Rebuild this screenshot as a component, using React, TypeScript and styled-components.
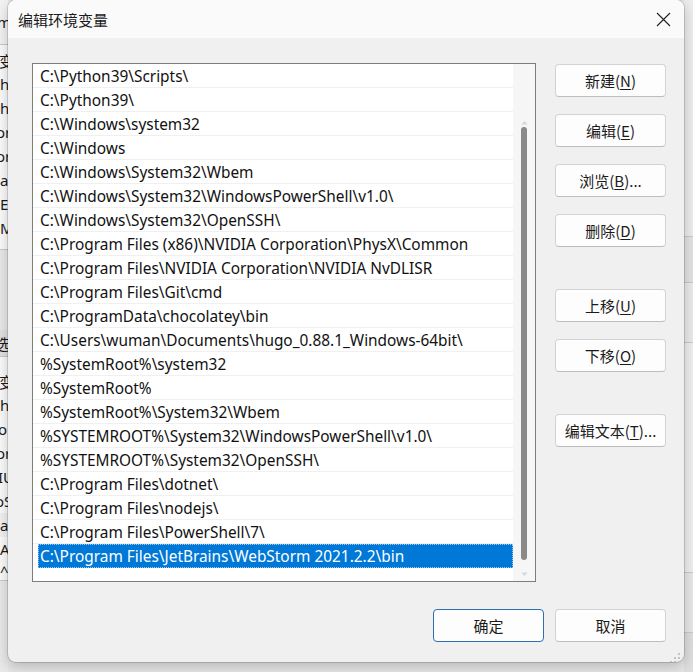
import React from 'react';
import styled, { createGlobalStyle } from 'styled-components';

const GlobalStyle = createGlobalStyle`
  html, body { margin: 0; padding: 0; }
  body {
    width: 693px; height: 672px; overflow: hidden; background: #e9e9e9;
    font-family: "Noto Sans", "Noto Sans CJK SC", sans-serif;
  }
`;

const Desktop = styled.div`
  position: relative; width: 693px; height: 672px; overflow: hidden; background: #e6e6e6;
`;

const BackWindow = styled.div`
  position: absolute; inset: 0; display: flex; justify-content: space-between;
`;

const Strip = styled.div<{ w: number }>`
  width: ${p => p.w}px; display: flex; flex-direction: column; overflow: hidden;
`;

const Band = styled.div<{ h: number; bg: string; line?: boolean }>`
  height: ${p => p.h}px; flex: none; background: ${p => p.bg};
  border-bottom: ${p => (p.line ? '1px solid #c9c9c9' : 'none')};
  display: flex; align-items: center; white-space: nowrap; overflow: hidden;
  font-size: 15px; color: #1a1a1a; box-sizing: border-box;
`;

const BackLabel = styled.span<{ shift: number }>`
  margin-left: ${p => p.shift}px;
`;

const Dialog = styled.div`
  position: absolute; left: 8px; top: 0; width: 676px; height: 662px;
  background: #f0f0f0; border-radius: 8px; overflow: hidden;
  box-shadow: 0 0 0 1px rgba(0,0,0,0.14), 0 4px 14px rgba(0,0,0,0.22);
  display: flex; flex-direction: column;
`;

const TitleBar = styled.div`
  height: 38px; flex: none; background: #fafafa; display: flex; align-items: center;
  justify-content: space-between; padding-left: 10px;
`;

const Title = styled.span`
  font-size: 15px; color: #1b1b1b;
  font-family: "Noto Sans CJK SC", sans-serif;
`;

const CloseButton = styled.div`
  width: 42px; height: 38px; display: flex; align-items: center; justify-content: center;
`;

const Body = styled.div`
  flex: 1; display: flex; flex-direction: column; padding: 25px 18px 20px 24px;
  position: relative;
`;

const MainRow = styled.div`
  display: flex; gap: 19px; align-items: flex-start;
`;

const ListBox = styled.div`
  width: 504px; height: 519px; box-sizing: border-box; border: 1px solid #7d7d7d;
  background: #fff; display: flex;
`;

const Items = styled.div`
  width: 480px; display: flex; flex-direction: column;
`;

const Row = styled.div<{ selected?: boolean }>`
  height: 24px; box-sizing: border-box; flex: none;
  border-bottom: 1px solid ${p => (p.selected ? '#0078d7' : '#f0f0f0')};
  display: flex; align-items: center; white-space: nowrap; overflow: hidden;
  font-size: 15.4px; padding-top: 2px;
  margin-left: ${p => (p.selected ? 5 : 0)}px;
  padding-left: ${p => (p.selected ? 2 : 7)}px;
  background: ${p => (p.selected ? '#0078d7' : 'transparent')};
  color: ${p => (p.selected ? '#ffffff' : '#111111')};
  outline: ${p => (p.selected ? '1px dotted #9ec8ee' : 'none')};
  outline-offset: -1px;
`;

const ScrollTrack = styled.div`
  width: 22px; background: #f6f6f6; display: flex; flex-direction: column; align-items: center;
`;

const Arrow = styled.div<{ mt: number }>`
  margin-top: ${p => p.mt}px; height: 6px; display: flex; align-items: center; justify-content: center;
`;

const Thumb = styled.div`
  margin-top: 2px; width: 6px; height: 433px; border-radius: 3px; background: #8a8a8a;
`;

const Spacer = styled.div<{ h?: number }>`
  flex: ${p => (p.h ? 'none' : '1')}; height: ${p => (p.h ? `${p.h}px` : 'auto')};
`;

const ButtonColumn = styled.div`
  width: 111px; display: flex; flex-direction: column; padding-top: 1px;
`;

const Button = styled.div<{ mt?: number; primary?: boolean }>`
  margin-top: ${p => p.mt ?? 0}px; width: 111px; height: 33px; box-sizing: border-box;
  background: #fdfdfd; border: 1px solid ${p => (p.primary ? '#2d6fb5' : '#d3d3d3')};
  border-bottom-color: ${p => (p.primary ? '#2d6fb5' : '#bdbdbd')};
  border-radius: 4px; display: flex; align-items: center; justify-content: center;
  font-size: 15px; color: #1b1b1b; font-family: "Noto Sans CJK SC", sans-serif;
  u { text-underline-offset: 2px; }
`;

const Footer = styled.div`
  margin-top: 27px; display: flex; justify-content: flex-end; gap: 11px;
`;

const Grip = styled.div`
  position: absolute; right: 3px; bottom: 3px; width: 12px; height: 12px;
`;

const paths = [
  'C:\\Python39\\Scripts\\',
  'C:\\Python39\\',
  'C:\\Windows\\system32',
  'C:\\Windows',
  'C:\\Windows\\System32\\Wbem',
  'C:\\Windows\\System32\\WindowsPowerShell\\v1.0\\',
  'C:\\Windows\\System32\\OpenSSH\\',
  'C:\\Program Files (x86)\\NVIDIA Corporation\\PhysX\\Common',
  'C:\\Program Files\\NVIDIA Corporation\\NVIDIA NvDLISR',
  'C:\\Program Files\\Git\\cmd',
  'C:\\ProgramData\\chocolatey\\bin',
  'C:\\Users\\wuman\\Documents\\hugo_0.88.1_Windows-64bit\\',
  '%SystemRoot%\\system32',
  '%SystemRoot%',
  '%SystemRoot%\\System32\\Wbem',
  '%SYSTEMROOT%\\System32\\WindowsPowerShell\\v1.0\\',
  '%SYSTEMROOT%\\System32\\OpenSSH\\',
  'C:\\Program Files\\dotnet\\',
  'C:\\Program Files\\nodejs\\',
  'C:\\Program Files\\PowerShell\\7\\',
  'C:\\Program Files\\JetBrains\\WebStorm 2021.2.2\\bin',
];

type BandDef = { h: number; bg: string; line?: boolean; text?: string; shift?: number };

const leftBands: BandDef[] = [
  { h: 45, bg: '#f3f3f3', line: true, text: 'm', shift: -3 },
  { h: 3, bg: '#fbfbfb' },
  { h: 24, bg: '#fbfbfb', text: '变量', shift: -1 },
  { h: 24, bg: '#fbfbfb', text: 'h', shift: 0 },
  { h: 24, bg: '#fbfbfb', text: 'h', shift: 0 },
  { h: 24, bg: '#fbfbfb', text: 'or', shift: -4 },
  { h: 24, bg: '#fbfbfb', text: 'or', shift: -4 },
  { h: 24, bg: '#fbfbfb', text: 'a', shift: 0 },
  { h: 24, bg: '#fbfbfb', text: 'E', shift: 0 },
  { h: 24, bg: '#fbfbfb', text: 'M', shift: 0 },
  { h: 10, bg: '#fbfbfb', line: true },
  { h: 80, bg: '#e9e9e9' },
  { h: 27, bg: '#e2e2e2', line: true, text: '选', shift: -5 },
  { h: 12, bg: '#fbfbfb' },
  { h: 24, bg: '#fbfbfb', text: '变量', shift: -1 },
  { h: 24, bg: '#fbfbfb', text: 'h', shift: 0 },
  { h: 24, bg: '#fbfbfb', text: 'o', shift: -2 },
  { h: 24, bg: '#fbfbfb', text: 'or', shift: -4 },
  { h: 24, bg: '#fbfbfb', text: 'IU', shift: -2 },
  { h: 24, bg: '#fbfbfb', text: 'oS', shift: -5 },
  { h: 24, bg: '#f2f2f2', text: 'a', shift: 0 },
  { h: 24, bg: '#fbfbfb', text: 'A', shift: 0 },
  { h: 20, bg: '#fbfbfb', line: true, text: '^', shift: 0 },
  { h: 100, bg: '#e9e9e9' },
];

const rightBands: BandDef[] = [
  { h: 237, bg: '#ededed', line: true },
  { h: 46, bg: '#e3e3e3', line: true },
  { h: 60, bg: '#ebebeb', line: true },
  { h: 230, bg: '#efefef', line: true },
  { h: 60, bg: '#e8e8e8', line: true },
  { h: 60, bg: '#dedede' },
];

const renderBands = (bands: BandDef[]) =>
  bands.map((b, i) => (
    <Band key={i} h={b.h} bg={b.bg} line={b.line}>
      {b.text && <BackLabel shift={b.shift ?? 0}>{b.text}</BackLabel>}
    </Band>
  ));

const App: React.FC = () => (
  <>
    <GlobalStyle />
    <Desktop>
      <BackWindow>
        <Strip w={8}>{renderBands(leftBands)}</Strip>
        <Strip w={9}>{renderBands(rightBands)}</Strip>
      </BackWindow>
      <Dialog>
        <TitleBar>
          <Title>编辑环境变量</Title>
          <CloseButton>
            <svg width="15" height="15" viewBox="0 0 15 15">
              <path d="M1 1 L14 14 M14 1 L1 14" stroke="#1f1f1f" strokeWidth="1.1" fill="none" />
            </svg>
          </CloseButton>
        </TitleBar>
        <Body>
          <MainRow>
            <ListBox>
              <Items>
                {paths.map((p, i) => (
                  <Row key={i} selected={i === paths.length - 1}>{p}</Row>
                ))}
              </Items>
              <ScrollTrack>
                <Arrow mt={55}>
                  <svg width="7" height="5" viewBox="0 0 7 5">
                    <path d="M0.5 4.5 L3.5 1 L6.5 4.5 Z" fill="#d6d6d6" />
                  </svg>
                </Arrow>
                <Thumb />
                <Spacer />
                <Arrow mt={0}>
                  <svg width="7" height="5" viewBox="0 0 7 5">
                    <path d="M0.5 0.5 L3.5 4 L6.5 0.5 Z" fill="#d6d6d6" />
                  </svg>
                </Arrow>
                <Spacer h={4} />
              </ScrollTrack>
            </ListBox>
            <ButtonColumn>
              <Button>新建(<u>N</u>)</Button>
              <Button mt={17}>编辑(<u>E</u>)</Button>
              <Button mt={17}>浏览(<u>B</u>)...</Button>
              <Button mt={17}>删除(<u>D</u>)</Button>
              <Button mt={42}>上移(<u>U</u>)</Button>
              <Button mt={17}>下移(<u>O</u>)</Button>
              <Button mt={42}>编辑文本(<u>T</u>)...</Button>
            </ButtonColumn>
          </MainRow>
          <Footer>
            <Button primary>确定</Button>
            <Button>取消</Button>
          </Footer>
          <Grip>
            <svg width="12" height="12" viewBox="0 0 12 12">
              {[[10, 2], [10, 6], [6, 6], [10, 10], [6, 10], [2, 10]].map(([x, y], i) => (
                <rect key={i} x={x - 1} y={y - 1} width="2" height="2" fill="#c4c4c4" />
              ))}
            </svg>
          </Grip>
        </Body>
      </Dialog>
    </Desktop>
  </>
);

export default App;
